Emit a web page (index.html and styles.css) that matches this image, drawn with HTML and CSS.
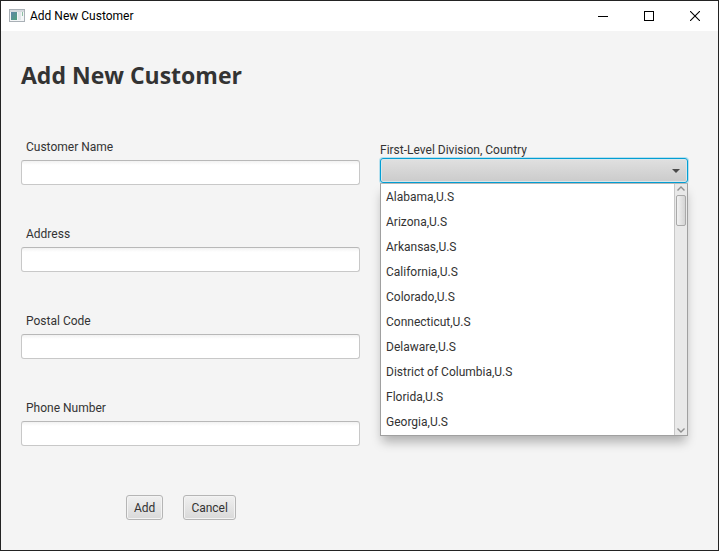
FILE: index.html
```html
<!DOCTYPE html>
<html lang="en">
<head>
<meta charset="utf-8">
<meta name="viewport" content="width=device-width, initial-scale=1">
<title>Add New Customer</title>
<link rel="stylesheet" href="styles.css">
</head>
<body>
<div class="window">
  <header class="titlebar">
    <svg class="app-icon" width="16" height="14" viewBox="0 0 16 14" aria-hidden="true">
      <defs>
        <linearGradient id="pane" x1="0" y1="0" x2="1" y2="1">
          <stop offset="0" stop-color="#5f86a8"/>
          <stop offset="1" stop-color="#4fa07c"/>
        </linearGradient>
      </defs>
      <rect x="0.5" y="0.5" width="15" height="12" fill="#f4f6f7" stroke="#a9b0b6"/>
      <rect x="1" y="1" width="14" height="2" fill="#d5dade"/>
      <rect x="2" y="3" width="6" height="8" fill="url(#pane)"/>
      <rect x="9" y="3" width="3" height="8" fill="#e2e7ea"/>
      <rect x="13" y="3" width="1" height="4" fill="#8fc0a4"/>
    </svg>
    <span class="caption">Add New Customer</span>
    <div class="window-controls">
      <button type="button" class="window-control" aria-label="Minimize">
        <svg width="10" height="10" viewBox="0 0 10 10" shape-rendering="crispEdges"><path d="M0 5.5H10" stroke="#000"/></svg>
      </button>
      <button type="button" class="window-control" aria-label="Maximize">
        <svg width="10" height="10" viewBox="0 0 10 10" shape-rendering="crispEdges"><rect x="0.5" y="0.5" width="9" height="9" fill="none" stroke="#000"/></svg>
      </button>
      <button type="button" class="window-control" aria-label="Close">
        <svg width="10" height="10" viewBox="0 0 10 10"><path d="M0 0L10 10M10 0L0 10" stroke="#000" stroke-width="1.1"/></svg>
      </button>
    </div>
  </header>

  <main class="content">
    <h1>Add New Customer</h1>
    <form>
      <div class="columns">
        <div class="fields">
          <div class="field">
            <label for="name">Customer Name</label>
            <input type="text" id="name">
          </div>
          <div class="field">
            <label for="address">Address</label>
            <input type="text" id="address">
          </div>
          <div class="field">
            <label for="postal">Postal Code</label>
            <input type="text" id="postal">
          </div>
          <div class="field">
            <label for="phone">Phone Number</label>
            <input type="text" id="phone">
          </div>
        </div>

        <div class="division">
          <label for="division">First-Level Division, Country</label>
          <div class="combo">
            <select id="division"><option value=""></option></select>
            <svg class="combo-arrow" width="8" height="4" viewBox="0 0 8 4" aria-hidden="true"><path d="M0 0H8L4 4Z" fill="#4a4a4a"/></svg>
            <div class="popup">
              <ul role="listbox" aria-label="First-Level Division, Country">
                <li role="option">Alabama,U.S</li>
                <li role="option">Arizona,U.S</li>
                <li role="option">Arkansas,U.S</li>
                <li role="option">California,U.S</li>
                <li role="option">Colorado,U.S</li>
                <li role="option">Connecticut,U.S</li>
                <li role="option">Delaware,U.S</li>
                <li role="option">District of Columbia,U.S</li>
                <li role="option">Florida,U.S</li>
                <li role="option">Georgia,U.S</li>
              </ul>
              <div class="scrollbar" aria-hidden="true">
                <svg width="8" height="5" viewBox="0 0 8 5"><path d="M0.5 4.5L4 1L7.5 4.5" fill="none" stroke="#8f8f8f" stroke-width="1.4"/></svg>
                <div class="track"><div class="thumb"></div></div>
                <svg width="8" height="5" viewBox="0 0 8 5"><path d="M0.5 0.5L4 4L7.5 0.5" fill="none" stroke="#8f8f8f" stroke-width="1.4"/></svg>
              </div>
            </div>
          </div>
        </div>
      </div>

      <div class="actions">
        <button type="submit" class="button">Add</button>
        <button type="button" class="button">Cancel</button>
      </div>
    </form>
  </main>
</div>
</body>
</html>
```

FILE: styles.css
```css
* {
  box-sizing: border-box;
}

body {
  margin: 0;
  font: 12px/16px Roboto, "Open Sans", sans-serif;
  color: #333;
}

.window {
  min-height: 100vh;
  border: 1px solid #232323;
  background: #f4f4f4;
}

.titlebar {
  display: flex;
  align-items: center;
  height: 30px;
  padding-left: 8px;
  background: #fff;
  color: #000;
}

.caption {
  margin-left: 5px;
}

.window-controls {
  display: flex;
  margin-left: auto;
}

.window-control {
  display: flex;
  align-items: center;
  justify-content: center;
  width: 46px;
  height: 30px;
  padding: 0;
  border: 0;
  background: none;
}

.content {
  padding: 26px 30px 30px 20px;
}

h1 {
  margin: 0 0 46px;
  font: 700 23px/36px "Open Sans", "Noto Sans", sans-serif;
}

.columns {
  display: grid;
  grid-template-columns: 339fr 308fr;
  column-gap: 20px;
}

.fields {
  display: flex;
  flex-direction: column;
  gap: 41px;
}

.field {
  display: flex;
  flex-direction: column;
  gap: 5px;
}

.field label {
  padding-left: 5px;
}

.field input {
  width: 100%;
  height: 25px;
  padding: 4px 7px;
  border: 1px solid #c8c8c8;
  border-top-color: #b8b8b8;
  border-radius: 3px;
  background: linear-gradient(#f2f2f2, #fff 4px);
  font: inherit;
  color: inherit;
}

.division {
  padding-top: 3px;
}

.division label {
  display: block;
}

.combo {
  position: relative;
}

.combo select {
  display: block;
  width: 100%;
  height: 25px;
  padding: 0 24px 0 7px;
  appearance: none;
  border: 1px solid #039ed3;
  border-radius: 3px;
  outline: none;
  box-shadow: 0 0 0 1px #b5dfee, inset 0 0 0 1px #d9e6ea;
  background: linear-gradient(#e0e0e0, #cbcbcb);
  font: inherit;
  color: inherit;
}

.combo-arrow {
  position: absolute;
  top: 11px;
  right: 8px;
  pointer-events: none;
}

.popup {
  position: absolute;
  top: 100%;
  left: 0;
  right: 0;
  display: flex;
  border: 1px solid #a0a0a0;
  border-top-color: #b8b8b8;
  background: #fff;
  box-shadow: 0 8px 10px -2px rgba(0, 0, 0, 0.28);
}

.popup ul {
  flex: 1;
  margin: 0;
  padding: 1px 0 0;
  list-style: none;
}

.popup li {
  padding: 0 5px;
  line-height: 25px;
}

.scrollbar {
  display: flex;
  flex-direction: column;
  align-items: center;
  width: 13px;
  padding: 2px 0;
  border-left: 1px solid #c8c8c8;
  background: #e9e9e9;
}

.track {
  flex: 1;
  padding: 4px 0;
}

.thumb {
  width: 10px;
  height: 31px;
  border: 1px solid #a9a9a9;
  border-radius: 2px;
  background: linear-gradient(90deg, #f2f2f2, #d4d4d4);
}

.actions {
  display: flex;
  gap: 20px;
  margin-top: 49px;
  padding-left: 105px;
}

.button {
  height: 25px;
  padding: 0 7px;
  border: 1px solid #b5b5b5;
  border-radius: 3px;
  background: linear-gradient(#f0f0f0, #d9d9d9);
  box-shadow: inset 0 0 0 1px #f3f3f3;
  font: inherit;
  color: inherit;
}
```
